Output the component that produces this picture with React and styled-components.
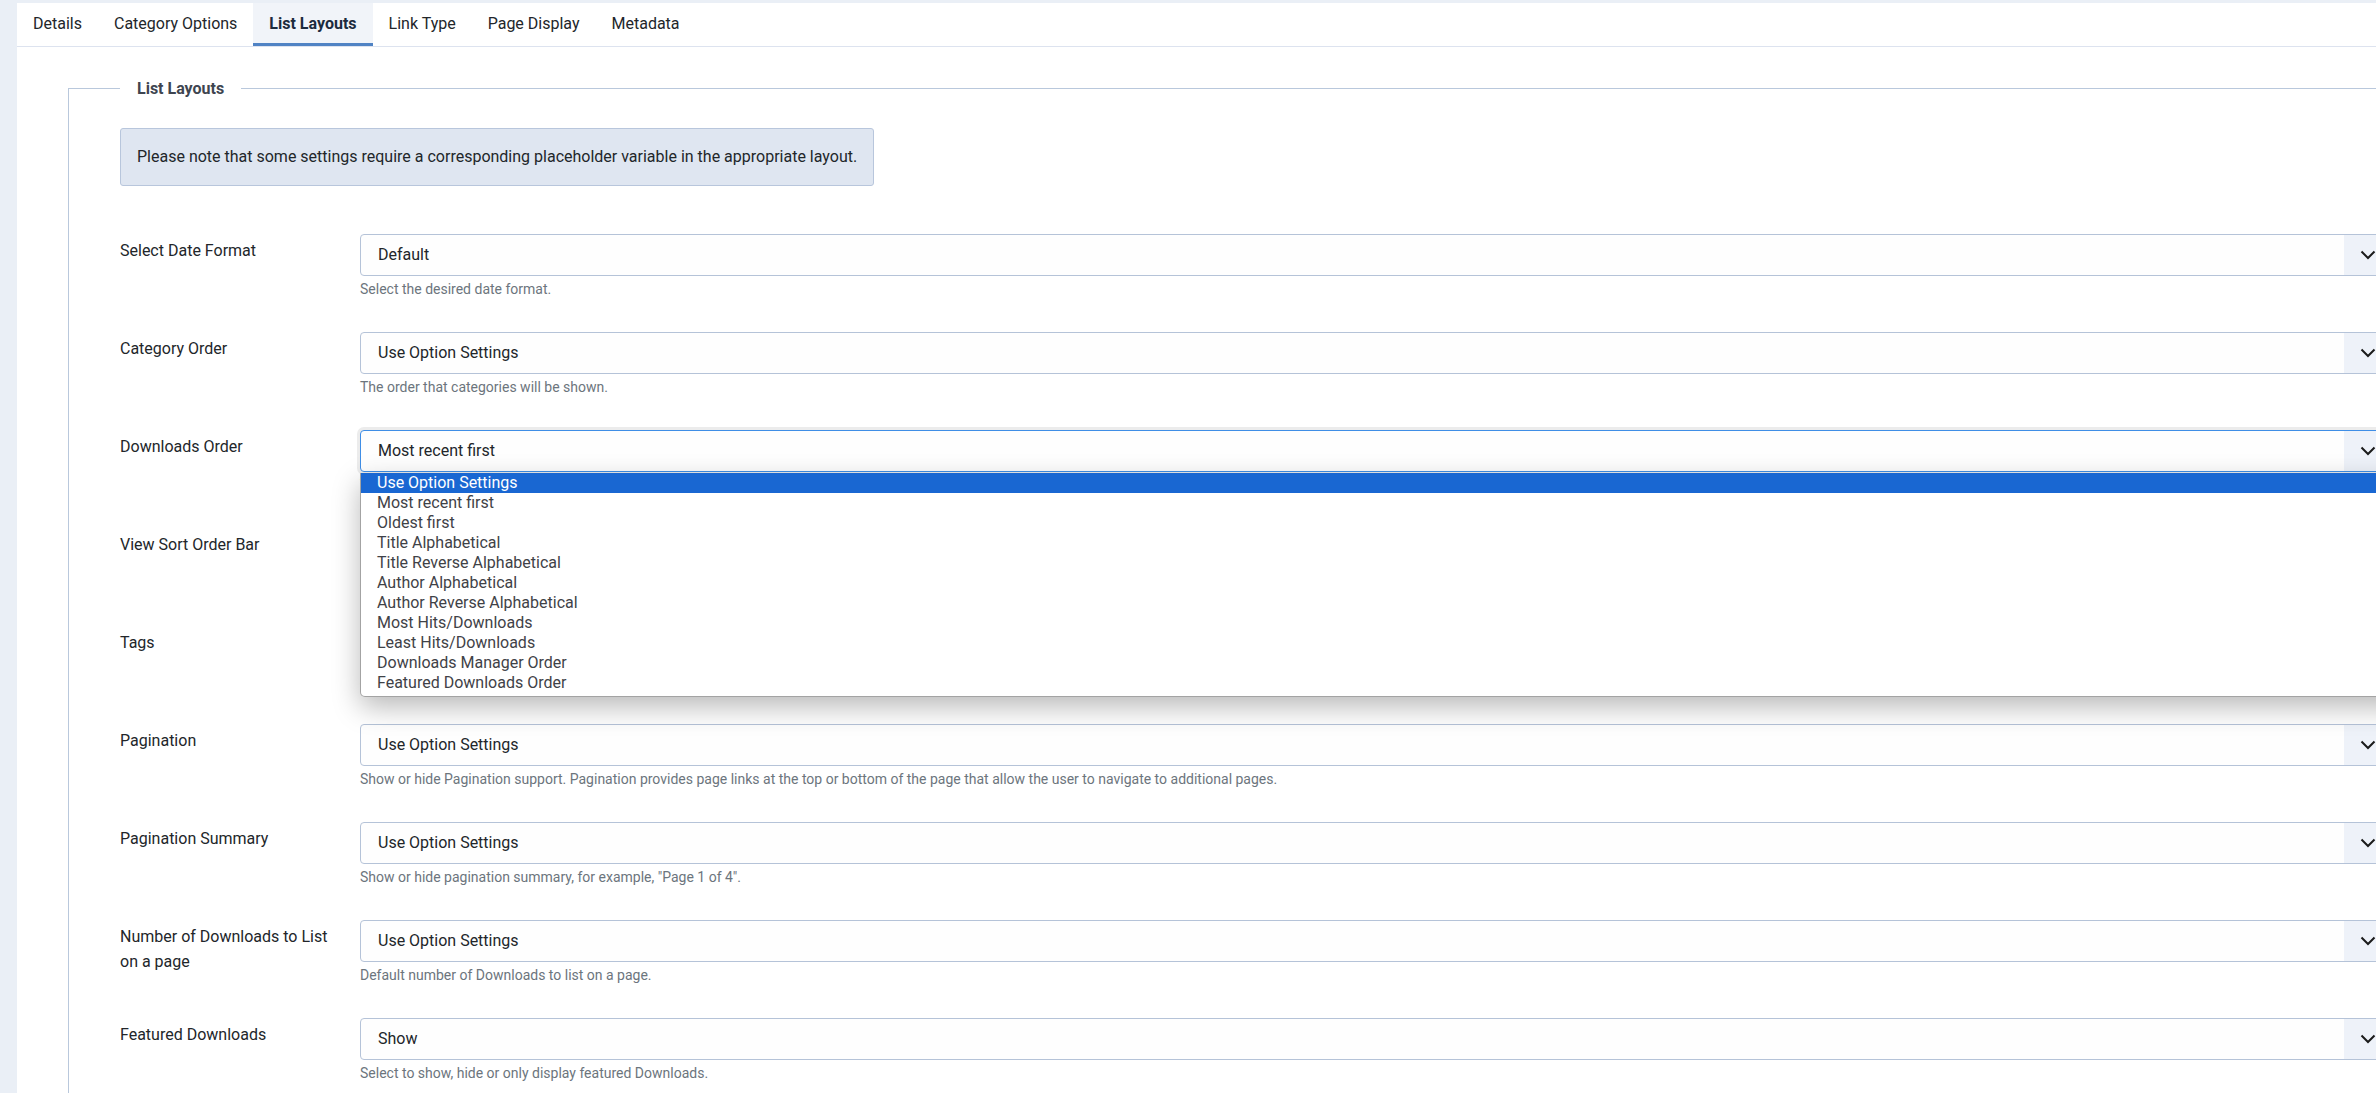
import React from 'react';
import styled, { createGlobalStyle } from 'styled-components';

const GlobalStyle = createGlobalStyle`
  html, body {
    margin: 0;
    padding: 0;
    overflow: hidden;
    background: #eaeff6;
    font-family: Roboto, "Liberation Sans", sans-serif;
    color: #22262a;
  }
`;

const Page = styled.div`
  padding: 3px 0 0 17px;
  width: 2600px;
`;

const Panel = styled.div`
  background: #fff;
  min-height: 1200px;
`;

const TabBar = styled.div`
  display: flex;
  height: 43px;
  border-bottom: 1px solid #dde3ef;
`;

const Tab = styled.div`
  display: flex;
  align-items: center;
  padding: 0 16px 2px;
  font-size: 16px;
  color: ${(p) => (p.$active ? '#1c2b3e' : '#22262a')};
  font-weight: ${(p) => (p.$active ? 700 : 400)};
  background: ${(p) => (p.$active ? '#f1f4f9' : 'transparent')};
  box-shadow: ${(p) => (p.$active ? 'inset 0 -3px 0 #5083c4' : 'none')};
`;

const Fieldset = styled.fieldset`
  margin: 29px 0 0 51px;
  padding: 0 0 40px 51px;
  width: 2400px;
  border: 1px solid #b9c8dc;
  border-right: none;
  border-bottom: none;
  min-inline-size: 0;
`;

const Legend = styled.legend`
  padding: 1px 17px 0;
  font-size: 16px;
  line-height: 24px;
  font-weight: 700;
  color: #3e4550;
`;

const Alert = styled.div`
  display: inline-block;
  margin-top: 27px;
  padding: 16px 16px;
  font-size: 16px;
  line-height: 24px;
  background: #dfe6f1;
  border: 1px solid #b8c6dc;
  border-radius: 3px;
  color: #22262a;
`;

const Rows = styled.div`
  margin-top: 48px;
  display: flex;
  flex-direction: column;
  gap: 34px;
`;

const Row = styled.div`
  display: grid;
  grid-template-columns: 240px 2033px;
`;

const Label = styled.div`
  padding: 4px 20px 0 0;
  font-size: 16px;
  line-height: 25px;
  color: #22262a;
`;

const Control = styled.div`
  position: relative;
`;

const Select = styled.div`
  display: flex;
  align-items: stretch;
  height: 42px;
  box-sizing: border-box;
  border: 1px solid ${(p) => (p.$focus ? '#3f8ee6' : '#b5c3d8')};
  border-radius: 4px;
  background: #fefefe;
  box-shadow: ${(p) => (p.$focus ? '0 0 0 3px #ececec' : 'none')};
`;

const Value = styled.div`
  flex: 1;
  display: flex;
  align-items: center;
  padding: 0 0 1px 17px;
  font-size: 16px;
  color: #22262a;
`;

const Arrow = styled.div`
  width: 48px;
  display: flex;
  align-items: center;
  justify-content: center;
  background: #eef2f9;
  border-radius: 0 3px 3px 0;
`;

const Help = styled.div`
  margin-top: 4px;
  font-size: 14px;
  line-height: 18px;
  color: #6c757d;
`;

const List = styled.ul`
  position: absolute;
  z-index: 10;
  top: 43px;
  left: 0;
  width: 2100px;
  margin: 0;
  padding: 0 0 3px;
  list-style: none;
  background: #fff;
  border: 1px solid #a3a3a3;
  border-top: none;
  border-radius: 0 0 5px 5px;
  box-shadow: 0 10px 28px rgba(0, 0, 0, 0.28);
`;

const Option = styled.li`
  height: 20px;
  line-height: 20px;
  padding-left: 16px;
  font-size: 16px;
  color: ${(p) => (p.$selected ? '#fff' : '#3f4247')};
  background: ${(p) => (p.$selected ? '#1967d2' : 'transparent')};
`;

const Chevron = () => (
  <svg width="16" height="10" viewBox="0 0 16 10">
    <path d="M1.5 1.5 L8 8 L14.5 1.5" fill="none" stroke="#1b1b1b" strokeWidth="2" />
  </svg>
);

const tabs = ['Details', 'Category Options', 'List Layouts', 'Link Type', 'Page Display', 'Metadata'];

const orderOptions = [
  'Use Option Settings',
  'Most recent first',
  'Oldest first',
  'Title Alphabetical',
  'Title Reverse Alphabetical',
  'Author Alphabetical',
  'Author Reverse Alphabetical',
  'Most Hits/Downloads',
  'Least Hits/Downloads',
  'Downloads Manager Order',
  'Featured Downloads Order',
];

const fields = [
  { label: 'Select Date Format', value: 'Default', help: 'Select the desired date format.' },
  { label: 'Category Order', value: 'Use Option Settings', help: 'The order that categories will be shown.' },
  { label: 'Downloads Order', value: 'Most recent first', help: 'The order that Downloads will be shown.', open: true },
  { label: 'View Sort Order Bar', value: 'Use Option Settings', help: 'Show or hide the sort order bar.' },
  { label: 'Tags', value: 'Use Option Settings', help: 'Show or hide the tags.' },
  {
    label: 'Pagination',
    value: 'Use Option Settings',
    help: 'Show or hide Pagination support. Pagination provides page links at the top or bottom of the page that allow the user to navigate to additional pages.',
  },
  { label: 'Pagination Summary', value: 'Use Option Settings', help: 'Show or hide pagination summary, for example, "Page 1 of 4".' },
  { label: 'Number of Downloads to List on a page', value: 'Use Option Settings', help: 'Default number of Downloads to list on a page.' },
  { label: 'Featured Downloads', value: 'Show', help: 'Select to show, hide or only display featured Downloads.' },
];

const App = () => {
  return (
    <>
      <GlobalStyle />
      <Page>
        <Panel>
          <TabBar>
            {tabs.map((t) => (
              <Tab key={t} $active={t === 'List Layouts'}>{t}</Tab>
            ))}
          </TabBar>
          <Fieldset>
            <Legend>List Layouts</Legend>
            <Alert>Please note that some settings require a corresponding placeholder variable in the appropriate layout.</Alert>
            <Rows>
              {fields.map((f) => (
                <Row key={f.label}>
                  <Label>{f.label}</Label>
                  <Control>
                    <Select $focus={f.open}>
                      <Value>{f.value}</Value>
                      <Arrow>
                        <Chevron />
                      </Arrow>
                    </Select>
                    <Help>{f.help}</Help>
                    {f.open && (
                      <List>
                        {orderOptions.map((o, i) => (
                          <Option key={o} $selected={i === 0}>{o}</Option>
                        ))}
                      </List>
                    )}
                  </Control>
                </Row>
              ))}
            </Rows>
          </Fieldset>
        </Panel>
      </Page>
    </>
  );
};

export default App;
